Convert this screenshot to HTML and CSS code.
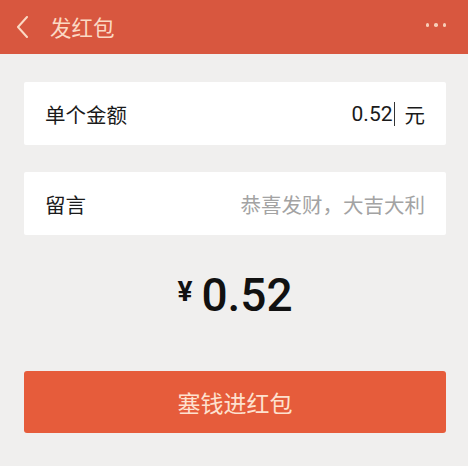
FILE: index.html
```html
<!DOCTYPE html>
<html>
  <head>
    <meta charset="utf-8" />
    <title>发红包</title>
    <link rel="stylesheet" href="styles.css">
  </head>
  <body>
    <div class="topbar">
      <svg class="back" width="14" height="22" viewBox="0 0 14 22" fill="none" stroke="currentColor" stroke-width="2" stroke-linecap="round" stroke-linejoin="round">
        <path d="M12 1 L3 11 L12 21"></path>
      </svg>
      <span class="title">发红包</span>
      <span class="more">
        <i></i><i></i><i></i>
      </span>
    </div>

    <div class="content">
      <div class="card">
        <span class="label">单个金额</span>
        <span class="value">0.52<span class="caret"></span></span>
        <span class="unit">元</span>
      </div>

      <div class="card">
        <span class="label">留言</span>
        <span class="placeholder">恭喜发财，大吉大利</span>
      </div>

      <div class="amount">
        <span class="yen">¥</span><span class="num">0.52</span>
      </div>

      <button class="btn">塞钱进红包</button>
    </div>
  </body>
</html>
```

FILE: styles.css
```css
body {
  margin: 0;
  background: #f0efee;
  font-family: "Roboto", "Noto Sans CJK SC", sans-serif;
  color: #1a1a1a;
}
.topbar {
  height: 54px;
  background: #d8573f;
  color: #fbd9c4;
  display: flex;
  align-items: center;
  padding: 0 22px 0 15px;
}
.back {
  margin-right: 21px;
}
.title {
  font-size: 21.5px;
  flex: 1;
  margin-top: -2px;
}
.more {
  display: flex;
  gap: 5px;
  margin-top: -4px;
}
.more i {
  width: 3.5px;
  height: 3.5px;
  border-radius: 50%;
  background: #f7cdb8;
}
.content {
  padding: 28px 22px 0 24px;
}
.card {
  background: #fff;
  height: 63px;
  border-radius: 2px;
  display: flex;
  align-items: center;
  padding: 0 21px;
  margin-bottom: 27px;
  font-size: 20.5px;
}
.label {
  flex: 1;
}
.value {
  font-size: 21px;
  display: flex;
  align-items: center;
}
.caret {
  width: 1px;
  height: 24px;
  background: #333;
  margin-left: 1px;
}
.unit {
  margin-left: 10px;
}
.placeholder {
  color: #a3a3a3;
}
.amount {
  margin-top: 6px;
  text-align: center;
  line-height: 60px;
  font-weight: 500;
  color: #111;
}
.yen {
  font-size: 28px;
  font-weight: 700;
  vertical-align: 10px;
  margin-right: 9px;
}
.num {
  font-size: 46px;
}
.btn {
  display: block;
  width: 100%;
  height: 62px;
  margin-top: 35px;
  border: none;
  border-radius: 3px;
  background: #e65c3b;
  color: #fde1cf;
  font-family: "Noto Sans CJK SC", sans-serif;
  font-size: 23px;
}
```
